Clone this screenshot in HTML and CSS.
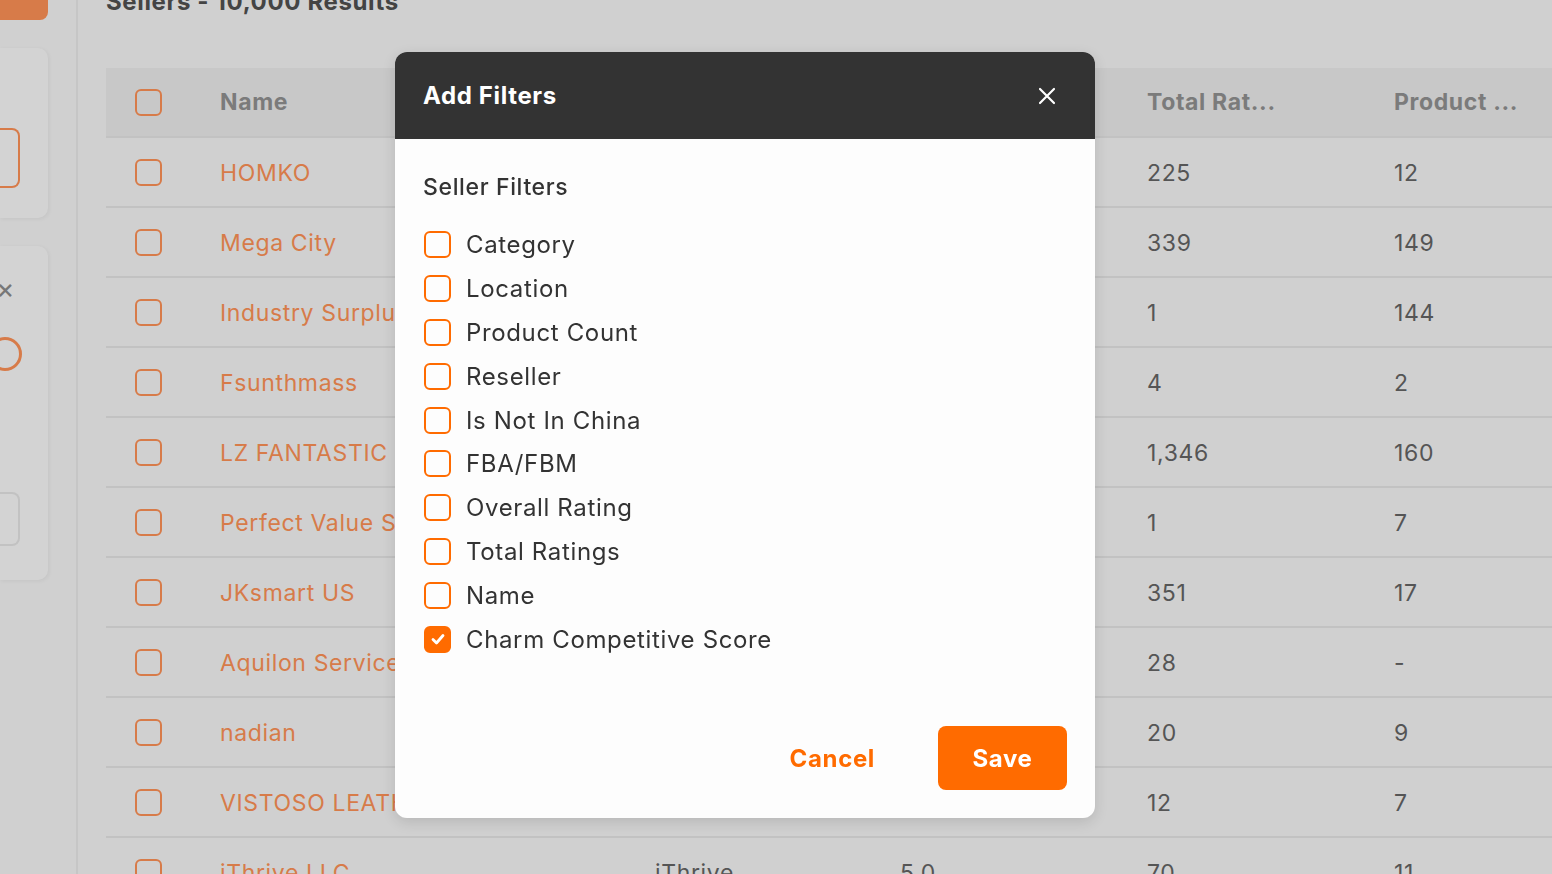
FILE: index.html
```html
<!doctype html>
<html lang="en">
<head>
<meta charset="utf-8">
<title>Sellers – Add Filters</title>
<meta name="viewport" content="width=device-width, initial-scale=1">
<link rel="stylesheet" href="styles.css">
</head>
<body>

<div class="page">
  <!-- sidebar (scrolled, partly off screen) -->
  <aside class="side">
    <div class="side-btn"></div>
    <div class="side-card card-a">
      <div class="side-input orange"></div>
    </div>
    <div class="side-card card-b">
      <span class="side-x">&times;</span>
      <span class="side-ring"></span>
      <div class="side-input grey"></div>
    </div>
  </aside>

  <main class="main">
    <h1 class="title">Sellers - 10,000 Results</h1>

    <div class="table">
      <div class="row head">
        <span class="cell"><i class="box"></i></span>
        <span class="cell">Name</span>
        <span class="cell"></span>
        <span class="cell"></span>
        <span class="cell">Total Rat...</span>
        <span class="cell">Product ...</span>
      </div>
      <div class="row"><span class="cell"><i class="box"></i></span><span class="cell name">HOMKO</span><span class="cell"></span><span class="cell"></span><span class="cell">225</span><span class="cell">12</span></div>
      <div class="row"><span class="cell"><i class="box"></i></span><span class="cell name">Mega City</span><span class="cell"></span><span class="cell"></span><span class="cell">339</span><span class="cell">149</span></div>
      <div class="row"><span class="cell"><i class="box"></i></span><span class="cell name">Industry Surplus</span><span class="cell"></span><span class="cell"></span><span class="cell">1</span><span class="cell">144</span></div>
      <div class="row"><span class="cell"><i class="box"></i></span><span class="cell name">Fsunthmass</span><span class="cell"></span><span class="cell"></span><span class="cell">4</span><span class="cell">2</span></div>
      <div class="row"><span class="cell"><i class="box"></i></span><span class="cell name">LZ FANTASTIC</span><span class="cell"></span><span class="cell"></span><span class="cell">1,346</span><span class="cell">160</span></div>
      <div class="row"><span class="cell"><i class="box"></i></span><span class="cell name">Perfect Value Store</span><span class="cell"></span><span class="cell"></span><span class="cell">1</span><span class="cell">7</span></div>
      <div class="row"><span class="cell"><i class="box"></i></span><span class="cell name">JKsmart US</span><span class="cell"></span><span class="cell"></span><span class="cell">351</span><span class="cell">17</span></div>
      <div class="row"><span class="cell"><i class="box"></i></span><span class="cell name">Aquilon Services</span><span class="cell"></span><span class="cell"></span><span class="cell">28</span><span class="cell">-</span></div>
      <div class="row"><span class="cell"><i class="box"></i></span><span class="cell name">nadian</span><span class="cell"></span><span class="cell"></span><span class="cell">20</span><span class="cell">9</span></div>
      <div class="row"><span class="cell"><i class="box"></i></span><span class="cell name">VISTOSO LEATHER</span><span class="cell"></span><span class="cell"></span><span class="cell">12</span><span class="cell">7</span></div>
      <div class="row"><span class="cell"><i class="box"></i></span><span class="cell name">iThrive LLC</span><span class="cell">iThrive</span><span class="cell">5.0</span><span class="cell">70</span><span class="cell">11</span></div>
    </div>
  </main>
</div>

<!-- modal -->
<div class="modal">
  <div class="modal-head">
    <span class="modal-title">Add Filters</span>
    <svg class="close" width="18" height="18" viewBox="0 0 18 18" aria-hidden="true">
      <path d="M2 2 L16 16 M16 2 L2 16" stroke="#fff" stroke-width="2.2" stroke-linecap="round"/>
    </svg>
  </div>
  <div class="modal-body">
    <h2 class="group">Seller Filters</h2>
    <ul class="opts">
      <li><i class="chk"></i>Category</li>
      <li><i class="chk"></i>Location</li>
      <li><i class="chk"></i>Product Count</li>
      <li><i class="chk"></i>Reseller</li>
      <li><i class="chk"></i>Is Not In China</li>
      <li><i class="chk"></i>FBA/FBM</li>
      <li><i class="chk"></i>Overall Rating</li>
      <li><i class="chk"></i>Total Ratings</li>
      <li><i class="chk"></i>Name</li>
      <li><i class="chk on"><svg width="18" height="18" viewBox="0 0 18 18" aria-hidden="true"><path d="M4 9.5 L7.5 13 L14 5.5" fill="none" stroke="#fff" stroke-width="2.8" stroke-linecap="round" stroke-linejoin="round"/></svg></i>Charm Competitive Score</li>
    </ul>
  </div>
  <div class="modal-foot">
    <button class="btn-cancel">Cancel</button>
    <button class="btn-save">Save</button>
  </div>
</div>

</body>
</html>
```

FILE: styles.css
```css
:root{
  --c-bg:#d0d0d0;
  --c-head:#c8c8c8;
  --c-line:#c2c2c2;
  --c-dim-orange:#d77b49;
  --c-dim-text:#555;
  --c-orange:#ff6b00;
  --c-dark:#333;
  --c-text:#333;
}
*{box-sizing:border-box;margin:0;padding:0;}
html,body{height:100%;overflow:hidden;}
body{font-family:Inter,"Open Sans",Arial,sans-serif;letter-spacing:.04em;background:var(--c-bg);color:var(--c-text);}

.page{display:flex;height:100%;}

/* sidebar */
.side{width:78px;flex:none;border-right:2px solid #c6c6c6;display:flex;flex-direction:column;}
.side-btn{width:48px;height:20px;background:var(--c-dim-orange);border-radius:0 0 8px 0;}
.side-card{width:48px;margin-top:28px;background:#d3d3d3;border-radius:0 10px 10px 0;box-shadow:1px 1px 4px rgb(0 0 0 / .06);position:relative;}
.card-a{height:170px;padding-top:80px;}
.card-b{height:334px;}
.side-input{width:20px;height:60px;border-radius:0 8px 8px 0;}
.side-input.orange{border:2px solid var(--c-dim-orange);border-left:none;}
.side-input.grey{position:absolute;top:246px;height:54px;border:2px solid #c2c2c2;border-left:none;}
.side-x{position:absolute;top:28px;left:-4px;font-size:28px;line-height:1;color:#777;}
.side-ring{position:absolute;top:91px;left:-12px;width:34px;height:34px;border:3.5px solid var(--c-dim-orange);border-radius:50%;}

/* main */
.main{flex:1;padding:0 0 0 28px;margin-top:-13px;}
.title{font-size:24px;font-weight:700;color:#444;line-height:30px;margin-bottom:51px;}

.row{display:grid;grid-template-columns:114px 435px 245px 247px 247px 1fr;height:70px;align-items:center;border-bottom:2px solid var(--c-line);font-size:23px;color:var(--c-dim-text);padding-top:1px;}
.row.head{background:var(--c-head);font-weight:700;color:#7b7b7b;padding-top:0;}
.cell{white-space:nowrap;overflow:hidden;text-overflow:ellipsis;padding-right:12px;}
.cell:first-child{padding-left:29px;display:flex;}
.name{color:var(--c-dim-orange);}
.box{display:block;width:27px;height:27px;border:2.5px solid var(--c-dim-orange);border-radius:6px;}

/* modal */
.modal{position:fixed;left:395px;top:52px;width:700px;height:766px;background:#fdfdfd;border-radius:12px;overflow:hidden;display:flex;flex-direction:column;box-shadow:0 4px 14px rgb(0 0 0 / .12);}
.modal-head{height:87px;flex:none;background:var(--c-dark);display:flex;align-items:center;justify-content:space-between;padding:0 39px 0 28px;}
.modal-title{color:#fff;font-size:24px;font-weight:700;}
.modal-body{flex:1;padding:34px 28px 0;}
.group{font-size:23px;font-weight:500;color:var(--c-text);margin-bottom:22px;}
.opts{list-style:none;display:flex;flex-direction:column;}
.opts li{display:flex;align-items:center;height:43.8px;font-size:24px;color:var(--c-text);}
.chk{width:27px;height:27px;border:2.5px solid var(--c-orange);border-radius:6px;margin:0 15px 0 1px;display:flex;align-items:center;justify-content:center;flex:none;}
.chk.on{background:var(--c-orange);}
.modal-foot{display:flex;justify-content:flex-end;align-items:center;gap:63px;padding:0 28px 28px;}
button{font-family:inherit;letter-spacing:inherit;border:none;background:none;cursor:pointer;font-size:24px;font-weight:700;}
.btn-cancel{color:var(--c-orange);}
.btn-save{width:129px;height:64px;background:var(--c-orange);color:#fff;border-radius:8px;}
```
